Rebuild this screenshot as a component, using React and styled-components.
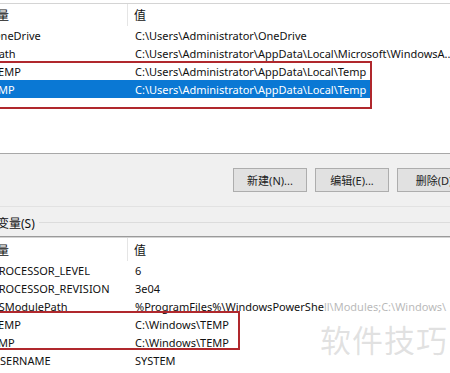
import React from 'react'
import styled, { createGlobalStyle } from 'styled-components'

const GlobalStyle = createGlobalStyle`
  body {
    margin: 0;
    background: #ffffff;
    overflow: hidden;
    font-family: "Noto Sans", "Noto Sans CJK SC", sans-serif;
  }
`

let userVars = [
  { name: 'OneDrive', value: 'C:\\Users\\Administrator\\OneDrive' },
  { name: 'Path', value: 'C:\\Users\\Administrator\\AppData\\Local\\Microsoft\\WindowsA...' },
  { name: 'TEMP', value: 'C:\\Users\\Administrator\\AppData\\Local\\Temp' },
  { name: 'TMP', value: 'C:\\Users\\Administrator\\AppData\\Local\\Temp', selected: true },
]

let systemVars = [
  { name: 'PROCESSOR_LEVEL', value: '6' },
  { name: 'PROCESSOR_REVISION', value: '3e04' },
  { name: 'PSModulePath', value: '%ProgramFiles%\\WindowsPowerShe', faded: 'll\\Modules;C:\\Windows\\' },
  { name: 'TEMP', value: 'C:\\Windows\\TEMP' },
  { name: 'TMP', value: 'C:\\Windows\\TEMP' },
  { name: 'USERNAME', value: 'SYSTEM' },
]

export default function App() {
  return (
    <Window>
      <GlobalStyle />
      <UpperPanel>
        <List>
          <Header>
            <HeadName>变量</HeadName>
            <HeadValue>值</HeadValue>
          </Header>
          {userVars.map((v) => (
            <Row key={v.name} selected={v.selected}>
              <NameCell>{v.name}</NameCell>
              <ValueCell>{v.value}</ValueCell>
            </Row>
          ))}
        </List>
      </UpperPanel>

      <ButtonBar>
        <Button>新建(N)...</Button>
        <Button>编辑(E)...</Button>
        <Button>删除(D)</Button>
      </ButtonBar>

      <GroupHeader>
        <GroupLabel>系统变量(S)</GroupLabel>
      </GroupHeader>

      <LowerPanel>
        <List>
          <Header tall>
            <HeadName>变量</HeadName>
            <HeadValue>值</HeadValue>
          </Header>
          {systemVars.map((v) => (
            <Row key={v.name}>
              <NameCell>{v.name}</NameCell>
              <ValueCell>
                {v.value}
                {v.faded && <Faded>{v.faded}</Faded>}
              </ValueCell>
            </Row>
          ))}
        </List>
      </LowerPanel>

      <Mark top={61} width={377} height={48} />
      <Mark top={311} width={245} height={39} />
      <Watermark>软件技巧</Watermark>
    </Window>
  )
}

let Window = styled.div`
  position: relative;
  width: 450px;
  height: 373px;
  overflow: hidden;
  display: flex;
  flex-direction: column;
  background: #f0f0f0;
  font-size: 11px;
  color: #111;
`

let UpperPanel = styled.div`
  height: 150px;
  padding-top: 3px;
  background: #fff;
  border-bottom: 1px solid #a8a8a8;
`

let LowerPanel = styled.div`
  flex: 1;
  background: #fff;
  border-top: 1px solid #9a9a9a;
`

let List = styled.div`
  display: flex;
  flex-direction: column;
  border-top: 1px solid #d4d4d4;
`

let Header = styled.div`
  display: grid;
  grid-template-columns: 128px 242px;
  height: ${(p) => (p.tall ? 23 : 22)}px;
  align-items: center;
  font-size: 12px;
`

let HeadName = styled.div`
  margin-left: -15px;
  height: 100%;
  display: flex;
  align-items: center;
  border-right: 1px solid #e5e5e5;
`

let HeadValue = styled.div`
  padding-left: 6px;
`

let Row = styled.div`
  display: grid;
  grid-template-columns: 128px 242px;
  width: 370px;
  height: 18px;
  align-items: center;
  background: ${(p) => (p.selected ? '#0a78d4' : 'transparent')};
  color: ${(p) => (p.selected ? '#fff' : '#111')};
`

let NameCell = styled.div`
  margin-left: -8px;
  white-space: nowrap;
`

let ValueCell = styled.div`
  padding-left: 7px;
  white-space: nowrap;
`

let Faded = styled.span`
  opacity: 0.3;
`

let ButtonBar = styled.div`
  height: 53px;
  display: flex;
  gap: 8px;
  padding: 14px 0 0 233px;
  box-sizing: border-box;
  border-bottom: 1px solid #e2e2e2;
`

let Button = styled.div`
  flex: 0 0 74px;
  height: 24px;
  box-sizing: border-box;
  border: 1px solid #adadad;
  background: #e1e1e1;
  display: flex;
  align-items: center;
  justify-content: center;
  color: #222;
  white-space: nowrap;
`

let GroupHeader = styled.div`
  height: 29px;
  display: flex;
  align-items: center;
  padding-top: 2px;
  box-sizing: border-box;
  margin-left: -27px;
  &::after {
    content: '';
    flex: 1;
    height: 1px;
    background: #dcdcdc;
    margin-left: 4px;
  }
`

let GroupLabel = styled.div`
  white-space: nowrap;
  font-size: 12px;
`

let Mark = styled.div`
  position: absolute;
  left: -5px;
  top: ${(p) => p.top}px;
  width: ${(p) => p.width}px;
  height: ${(p) => p.height}px;
  box-sizing: border-box;
  border: 2px solid #b0282d;
`

let Watermark = styled.div`
  position: absolute;
  left: 320px;
  top: 316px;
  font-size: 31px;
  letter-spacing: 1px;
  color: rgba(150, 150, 150, 0.28);
  font-family: "Noto Sans CJK SC", sans-serif;
`
